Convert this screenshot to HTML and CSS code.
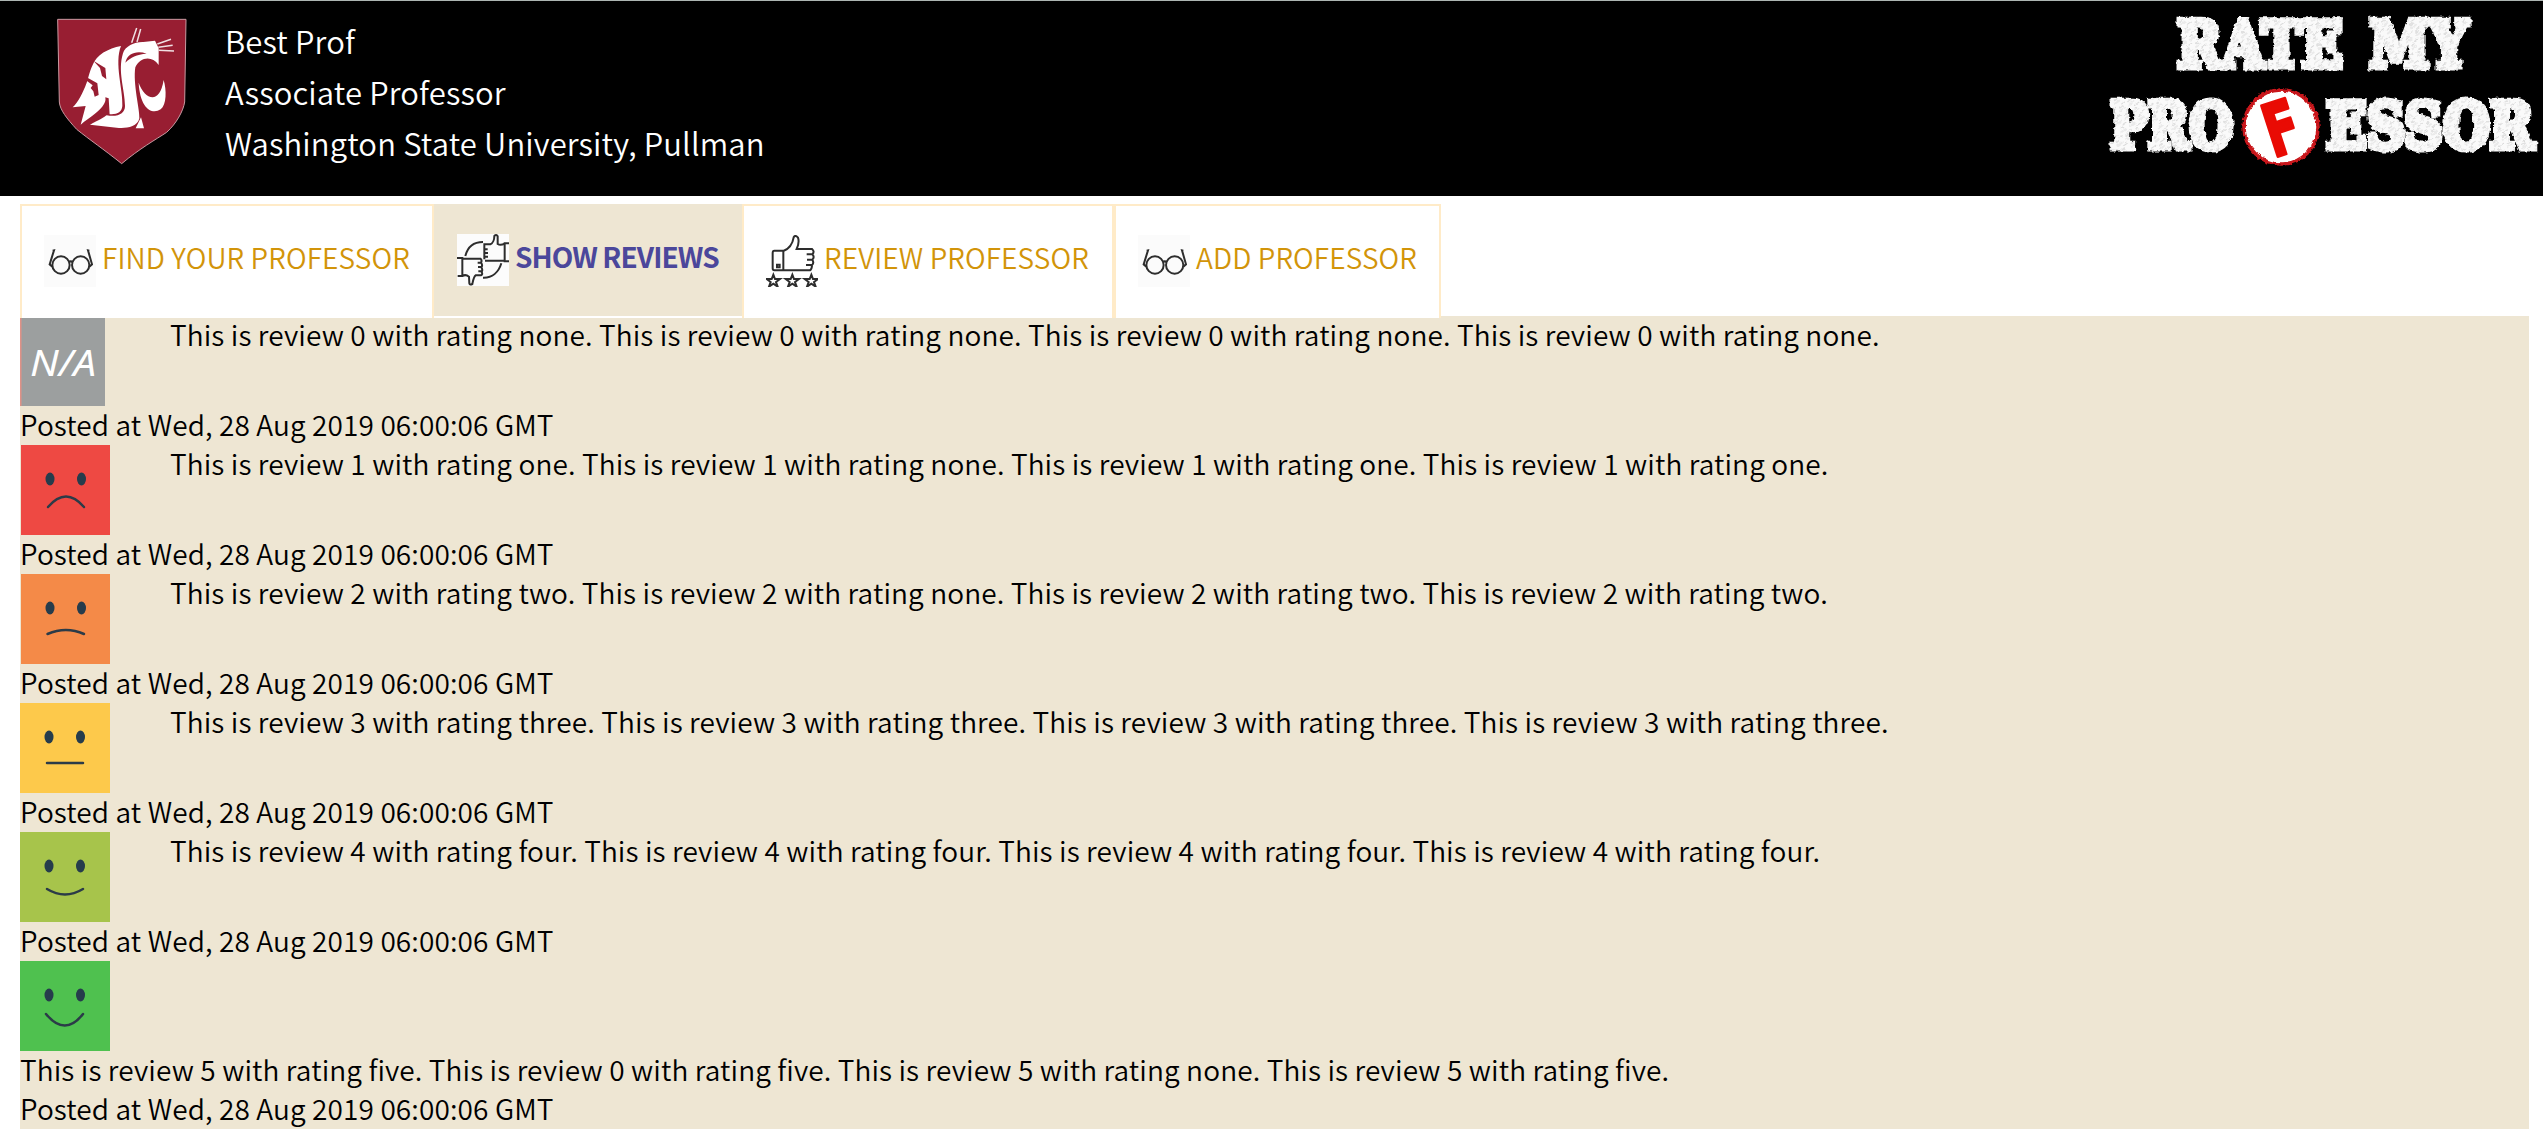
FILE: index.html
```html
<!DOCTYPE html>
<html lang="en">
<head>
<meta charset="utf-8">
<title>Rate My Professor</title>
<link rel="stylesheet" href="styles.css">
</head>
<body>
<header class="banner">
  <svg class="crest" viewBox="0 0 510 540" width="170" height="180">
    <path d="M53 58H438L434 306C430 332 410 370 380 397C345 420 300 445 245 491C190 447 150 420 110 388C80 355 60 330 58 306Z" fill="#981e32" stroke="#c99aa2" stroke-width="3"/>
    <path d="M243 138C205 145 168 165 158 195C148 215 145 235 140 248C128 280 115 305 98 322L137 318L122 374C150 350 180 335 192 312L201 293L204 342C230 345 245 338 247 318C250 270 222 190 243 138Z" fill="#fff"/>
    <path d="M160 182L196 204L199 238L186 228L180 204ZM140 232L172 250L176 285L164 290L160 274L152 264L158 256L140 242ZM196 292L206 295L209 345H199Z" fill="#981e32"/>
    <path d="M249 160C255 138 285 125 310 126L345 122L356 145L356 195C335 165 300 172 286 202C278 250 300 330 298 355C292 385 250 385 230 383L150 374C175 362 195 350 200 346C235 352 255 340 255 318C255 270 232 215 249 160Z" fill="#fff"/>
    <path d="M256 188C262 160 290 151 320 161C290 163 272 172 256 188Z" fill="#981e32"/>
    <path d="M296 248C312 295 358 320 371 240C380 270 380 315 362 328C335 345 300 325 296 248ZM287 385L303 352L312 385Z" fill="#fff"/>
    <path d="M275 128L290 84M291 126L302 87M352 132L393 118M355 142L398 136M356 151L402 153" stroke="#f0dfe2" stroke-width="4.500"/>
  </svg>
  <div class="identity"><div>Best Prof</div><div>Associate Professor</div><div>Washington State University, Pullman</div></div>
  <svg class="brand" viewBox="2080 0 463 196" width="463" height="196">
    <defs>
      <pattern id="chalk" width="11" height="9" patternUnits="userSpaceOnUse" patternTransform="rotate(-35)"><rect width="11" height="9" fill="#fafafa"/><path d="M0 2H7M5 5.500H11" stroke="#dadada"/><path d="M2 8H6" stroke="#c6c6c6"/></pattern>
      <filter id="rough" x="-5%" y="-10%" width="110%" height="120%"><feTurbulence type="fractalNoise" baseFrequency=".25" numOctaves="2" seed="3"/><feDisplacementMap in="SourceGraphic" scale="4" xChannelSelector="R" yChannelSelector="G"/></filter>
    </defs>
    <g class="chalk" fill="url(#chalk)" stroke="url(#chalk)" filter="url(#rough)">
      <text x="2177" y="67" textLength="166" lengthAdjust="spacingAndGlyphs">RATE</text>
      <text x="2369" y="67" textLength="99" lengthAdjust="spacingAndGlyphs">MY</text>
      <text x="2110" y="148" textLength="123" lengthAdjust="spacingAndGlyphs">PRO</text>
      <text x="2326" y="148" textLength="208" lengthAdjust="spacingAndGlyphs">ESSOR</text>
    </g>
    <circle cx="2281" cy="127" r="37" fill="#fff" stroke="#c9191b" stroke-width="3.500" filter="url(#rough)"/>
    <text class="grade" transform="translate(2281 127) rotate(-18)" x="-17" y="27" textLength="34" lengthAdjust="spacingAndGlyphs">F</text>
  </svg>
</header>
<nav class="tabs">
  <a class="tab find"><svg class="icon" viewBox="0 0 156 156"><use href="#glasses"/></svg><span>FIND YOUR PROFESSOR</span></a>
  <a class="tab active"><svg class="icon" viewBox="0 0 156 156"><path fill="#fcfcfc" d="M0 0H156V156H0Z"/><path class="line" d="M156 28H143V82H156M143 80H84M82 76V31H100C108 28 112 15 112 6Q118 0 122 7V30Q130 35 143 29M82 46H92M84 57H93M84 68H93M25 66C32 38 50 24 78 24M78 131C105 132 125 115 133 88M0 72H16V126H2M16 74H70Q76 78 72 86Q78 94 73 100Q78 108 74 114Q78 122 72 124H56C50 128 48 140 46 150Q38 154 37 148L36 128Q26 120 16 126M62 86H73M63 99H74M64 112H75"/></svg><span>SHOW REVIEWS</span></a>
  <a class="tab rate"><svg class="icon" viewBox="0 0 156 156"><path class="line" d="M25 47H52V106H25Q20 106 20 100V54Q20 47 25 47M52 48Q78 38 83 7Q88-2 96 8Q101 22 92 42H138Q147 50 139 58H122M139 58Q147 66 139 74H123M139 74Q145 84 138 90H120M138 90Q138 102 132 106H52M33 89H41V97H33Z"/><g class="line"><path id="star" d="M22 119L27 132H42L30 141L35 155L22 146L9 155L14 141L2 132H17Z"/><use href="#star" x="57"/><use href="#star" x="114"/></g></svg><span>REVIEW PROFESSOR</span></a>
  <a class="tab add"><svg class="icon" viewBox="0 0 156 156"><g id="glasses"><path fill="#fbfbfb" d="M0 0H156V156H0Z"/><path class="line" d="M25 95L17 88L30 46L26 47M136 95L144 88L132 46L136 47M74 82Q80 76 87 82"/><circle class="line" cx="51" cy="90" r="26"/><circle class="line" cx="110" cy="90" r="26"/></g></svg><span>ADD PROFESSOR</span></a>
</nav>
<main class="reviews">
  <article class="review"><div class="entry"><svg class="face" viewBox="0 0 90 90"><path fill="#9c9f9f" d="M0 0H85V90H0Z"/><path fill="#df9187" d="M0 0H1.500V90H0Z"/><text class="na" x="10" y="60" textLength="66" lengthAdjust="spacingAndGlyphs">N/A</text></svg><p>This is review 0 with rating none. This is review 0 with rating none. This is review 0 with rating none. This is review 0 with rating none.</p></div><p>Posted at Wed, 28 Aug 2019 06:00:06 GMT</p></article>
  <article class="review"><div class="entry"><svg class="face" viewBox="0 0 90 90"><path fill="#ee4943" d="M1 0H90V90H1Z"/><g id="eyes" fill="#263c4c"><ellipse cx="30" cy="34" rx="4.500" ry="6.500"/><ellipse cx="61.500" cy="34" rx="4.500" ry="6.500"/></g><path class="mouth" d="M28 62Q46 41 64 62"/></svg><p>This is review 1 with rating one. This is review 1 with rating none. This is review 1 with rating one. This is review 1 with rating one.</p></div><p>Posted at Wed, 28 Aug 2019 06:00:06 GMT</p></article>
  <article class="review"><div class="entry"><svg class="face" viewBox="0 0 90 90"><path fill="#f48a48" d="M1 0H90V90H1Z"/><use href="#eyes"/><path class="mouth" d="M27.500 60Q46 52 64 60"/></svg><p>This is review 2 with rating two. This is review 2 with rating none. This is review 2 with rating two. This is review 2 with rating two.</p></div><p>Posted at Wed, 28 Aug 2019 06:00:06 GMT</p></article>
  <article class="review"><div class="entry"><svg class="face" viewBox="0 0 90 90"><path fill="#fdc94b" d="M0 0H90V90H0Z"/><use href="#eyes" x="-1"/><path class="mouth" d="M27 60H63"/></svg><p>This is review 3 with rating three. This is review 3 with rating three. This is review 3 with rating three. This is review 3 with rating three.</p></div><p>Posted at Wed, 28 Aug 2019 06:00:06 GMT</p></article>
  <article class="review"><div class="entry"><svg class="face" viewBox="0 0 90 90"><path fill="#a7c44b" d="M0 0H90V90H0Z"/><use href="#eyes" x="-1"/><path class="mouth" d="M27 57Q45 68 63 57"/></svg><p>This is review 4 with rating four. This is review 4 with rating four. This is review 4 with rating four. This is review 4 with rating four.</p></div><p>Posted at Wed, 28 Aug 2019 06:00:06 GMT</p></article>
  <article class="review"><svg class="face" viewBox="0 0 90 90"><path fill="#4fc14f" d="M0 0H90V90H0Z"/><use href="#eyes" x="-1"/><path class="mouth" d="M26 53Q45 76 63 53"/></svg><p>This is review 5 with rating five. This is review 0 with rating five. This is review 5 with rating none. This is review 5 with rating five.</p><p>Posted at Wed, 28 Aug 2019 06:00:06 GMT</p></article>
</main>
</body>
</html>
```

FILE: styles.css
```css
* { box-sizing: border-box; }
body { margin: 0; background: #fff; color: #000; font: 350 28px/36px "Noto Sans CJK SC", sans-serif; letter-spacing: .11px; }
p { margin: 0; padding-bottom: 3px; white-space: nowrap; }
svg { display: block; flex: none; letter-spacing: 0; }
.banner { display: flex; height: 196px; background: #000; border-top: 1px solid #adb5b2; color: #fff; }
.crest { margin: -1px 15px 0 40px; }
.identity { padding-top: 14px; font-size: 31px; line-height: 51px; letter-spacing: .15px; white-space: nowrap; }
.brand { margin: -1px 0 0 auto; }
.chalk { font: bold 63px "DejaVu Serif", serif; stroke-width: 7px; }
.grade { font: bold 73px "DejaVu Sans", sans-serif; fill: #e90b04; stroke: #e90b04; stroke-width: 3px; stroke-linejoin: round; }
.tabs { display: flex; position: relative; z-index: 1; width: max-content; height: 114px; margin: 8px 20px 0; background: #fff; }
.tab { display: flex; align-items: flex-start; gap: 6px; height: 114px; padding: 29px 0 0 22px; border: 2px solid #ffebc8; border-bottom: 0; color: #d29409; white-space: nowrap; }
.tab span { margin-top: 4px; }
.find { width: 414px; }
.rate { width: 372px; }
.add { width: 327px; }
.tab.active { width: 308px; height: 112px; padding: 28px 0 0 21px; background: #eee6d3; border-color: #eee6d3; color: #4b479b; font-weight: bold; letter-spacing: -.95px; }
.icon { width: 52px; height: 52px; }
.line { fill: none; stroke: #2d2d2d; stroke-width: 6px; }
.reviews { margin: -2px 14px 0 20px; background: #eee6d3; }
.entry { display: flex; height: 90px; }
.entry p { margin-left: 60px; }
.face { width: 90px; height: 90px; }
.mouth { fill: none; stroke: #2b3b48; stroke-width: 2.500px; stroke-linecap: round; }
.na { font: italic 36px "Noto Sans", sans-serif; fill: #fff; }
```
